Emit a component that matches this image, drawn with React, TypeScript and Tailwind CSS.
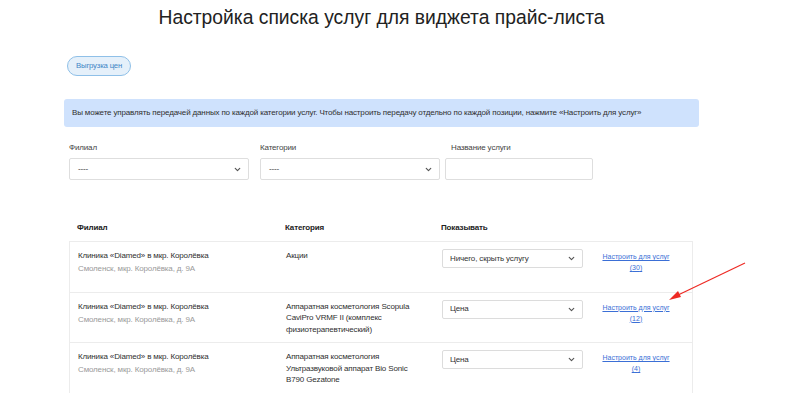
import React from "react";

const Chevron = () => (
  <svg width="9" height="9" viewBox="0 0 10 10" fill="none" stroke="#555" strokeWidth="1.3" strokeLinecap="round" strokeLinejoin="round">
    <path d="M2.5 3.8 L5 6.2 L7.5 3.8" />
  </svg>
);

const rows = [
  { cat: ["Акции"], show: "Ничего, скрыть услугу", n: 30 },
  { cat: ["Аппаратная косметология Scopula", "CaviPro VRMF II (комплекс", "физиотерапевтический)"], show: "Цена", n: 12 },
  { cat: ["Аппаратная косметология", "Ультразвуковой аппарат Bio Sonic", "B790 Gezatone"], show: "Цена", n: 4 },
];

export default function App() {
  return (
    <div className="relative w-[800px] h-[395px] overflow-hidden bg-white text-[#333]" style={{ fontFamily: '"Liberation Sans", Arial, sans-serif' }}>
      <div className="ml-[64px] w-[635px] flex flex-col">
        <h1 className="text-center text-[19.3px] leading-[24px] text-[#222] mt-[6px]">
          Настройка списка услуг для виджета прайс-листа
        </h1>
        <div className="mt-[26px] ml-[3px] flex">
          <button className="h-[20px] px-[8px] rounded-full border border-[#8fc0e8] bg-[#e5f0fa] text-[#3f86c6] text-[7.8px] tracking-[-0.2px] leading-none">
            Выгрузка цен
          </button>
        </div>
        <div className="mt-[23px] h-[28px] rounded-[3px] bg-[#cfe2fd] flex items-center pl-[8px] text-[8px] tracking-[-0.15px] text-[#2f2f2f]">
          Вы можете управлять передачей данных по каждой категории услуг. Чтобы настроить передачу отдельно по каждой позиции, нажмите «Настроить для услуг»
        </div>
        <div className="mt-[16px] ml-[5px] flex gap-[11px] text-[8px] tracking-[-0.15px]">
          <div className="flex flex-col w-[180px]">
            <span className="leading-[10px] text-[#444]">Филиал</span>
            <div className="mt-[5px] h-[22px] border border-[#dedede] rounded-[2px] flex items-center justify-between pl-[8px] pr-[6px]">
              <span>----</span>
              <Chevron />
            </div>
          </div>
          <div className="flex flex-col w-[180px]">
            <span className="leading-[10px] text-[#444]">Категории</span>
            <div className="mt-[5px] h-[22px] border border-[#dedede] rounded-[2px] flex items-center justify-between pl-[8px] pr-[6px]">
              <span>----</span>
              <Chevron />
            </div>
          </div>
          <div className="flex flex-col w-[148px] ml-[-6px]">
            <span className="leading-[10px] text-[#444] ml-[6px]">Название услуги</span>
            <div className="mt-[5px] h-[22px] border border-[#dedede] rounded-[2px]" />
          </div>
        </div>

        <div className="mt-[43px] ml-[5px] w-[624px] text-[8px] tracking-[-0.15px]">
          <div className="grid grid-cols-[208px_156px_152px_100px] pb-[8px] leading-[10px] font-bold text-[#222]">
            <div className="pl-[8px]">Филиал</div>
            <div className="pl-[8px]">Категория</div>
            <div className="pl-[8px]">Показывать</div>
            <div />
          </div>
          <div className="border-l border-r border-[#ececec]">
            {rows.map((r, i) => (
              <div key={i} className="grid grid-cols-[208px_156px_152px_100px] h-[50.5px] border-t border-[#ececec]">
                <div className="pl-[8px] pt-[7px] leading-[13px]">
                  <div className="text-[#2f2f2f]">Клиника «Diamed» в мкр. Королёвка</div>
                  <div className="text-[#9a9a9a]">Смоленск, мкр. Королёвка, д. 9А</div>
                </div>
                <div className="pl-[8px] pt-[8px] leading-[11.7px] text-[#2f2f2f]">
                  {r.cat.map((c, j) => (
                    <div key={j}>{c}</div>
                  ))}
                </div>
                <div className="pl-[8px] pt-[7px]">
                  <div className="w-[141px] h-[19px] border border-[#dcdcdc] rounded-[2px] flex items-center justify-between pl-[7px] pr-[6px] text-[#333]">
                    <span>{r.show}</span>
                    <Chevron />
                  </div>
                </div>
                <div className="pt-[9px] text-center text-[7px] tracking-normal leading-[11px] text-[#3b6fd6] underline">
                  <div>Настроить для услуг</div>
                  <div>({r.n})</div>
                </div>
              </div>
            ))}
          </div>
        </div>
      </div>

      <svg className="absolute left-0 top-0" width="800" height="395" viewBox="0 0 800 395">
        <line x1="745" y1="263" x2="676" y2="296" stroke="#ee2a24" strokeWidth="1.2" />
        <polygon points="669,300 678,291 681,297" fill="#ee2a24" />
      </svg>
    </div>
  );
}
